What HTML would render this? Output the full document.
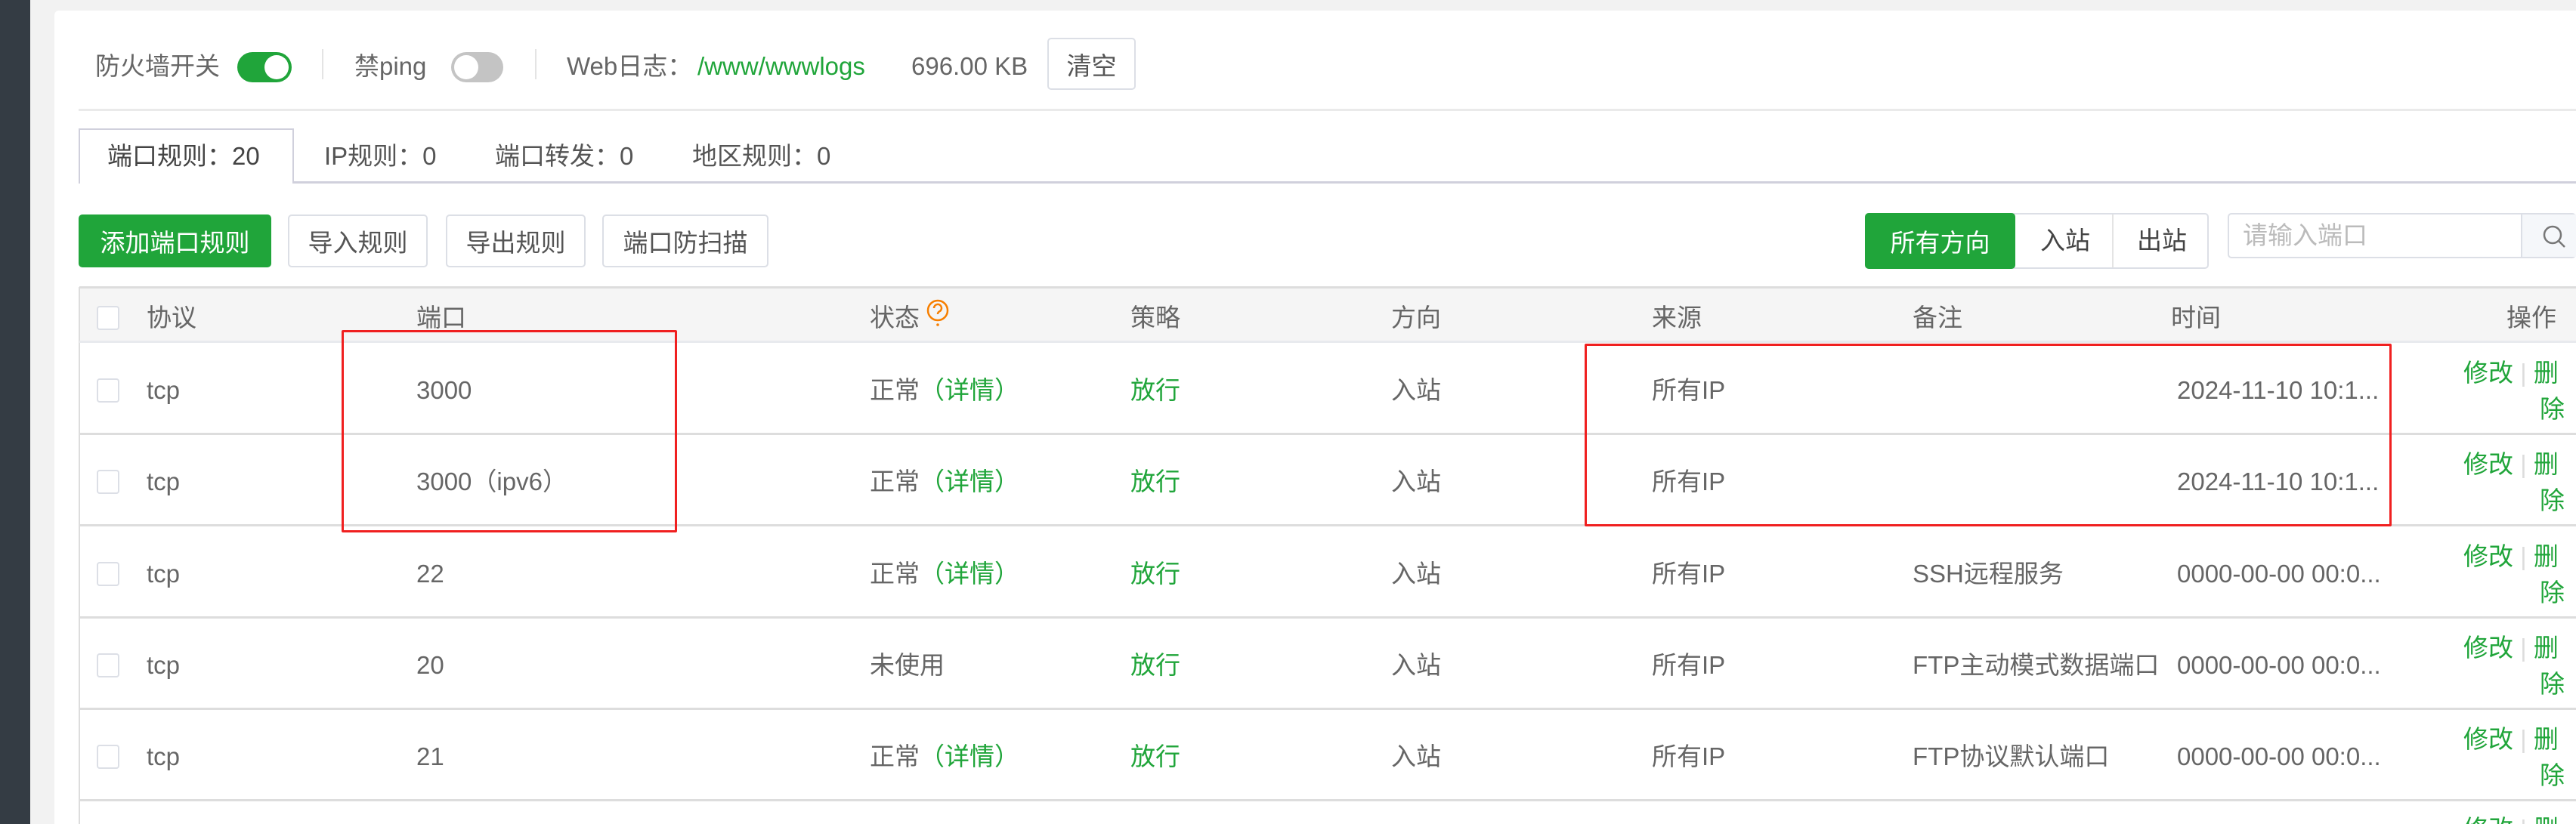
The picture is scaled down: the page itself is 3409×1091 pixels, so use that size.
<!DOCTYPE html>
<html style="width:3409px;height:1091px;overflow:hidden"><head><meta charset="utf-8"><style>
*{margin:0;padding:0;box-sizing:border-box}
body{width:3409px;height:1091px;overflow:hidden;background:#f2f2f2;position:relative;font-family:"Liberation Sans","Noto Sans CJK SC",sans-serif;font-size:33px;color:#666}
.a{position:absolute;white-space:nowrap}
.g{color:#20a53a}
.btn{position:absolute;border:2px solid #dcdfe6;border-radius:5px;background:#fff;display:flex;align-items:center;justify-content:center;color:#555}
.cb{position:absolute;left:128px;width:30px;height:32px;border:2px solid #dcdfe6;border-radius:4px;background:#fff}
.hl{position:absolute;left:105px;right:0;height:3px;background:#ddd}
.t{position:absolute;white-space:nowrap;line-height:40px}
.r .t{margin-top:4px}
.r .cb{margin-top:4px}
</style></head><body>
<div class="a" style="left:0;top:0;width:40px;height:1091px;background:#343c44"></div>
<div class="a" style="left:72px;top:14px;right:0;bottom:0;background:#fff;border-radius:6px 0 0 0"></div>

<div class="t" style="left:126px;top:68px">防火墙开关</div>
<div class="a" style="left:314px;top:69px;width:72px;height:40px;border-radius:20px;background:#20a53a"><div class="a" style="left:36px;top:4px;width:32px;height:32px;border-radius:50%;background:#fff"></div></div>
<div class="a" style="left:426px;top:65px;width:2px;height:40px;background:#e4e4e4"></div>
<div class="t" style="left:469px;top:68px">禁ping</div>
<div class="a" style="left:597px;top:69px;width:69px;height:40px;border-radius:20px;background:#c4c4c4"><div class="a" style="left:4px;top:4px;width:32px;height:32px;border-radius:50%;background:#fff"></div></div>
<div class="a" style="left:708px;top:65px;width:2px;height:40px;background:#e4e4e4"></div>
<div class="t" style="left:750px;top:68px">Web日志：</div>
<div class="t g" style="left:923px;top:68px">/www/wwwlogs</div>
<div class="t" style="left:1206px;top:68px">696.00 KB</div>
<div class="btn" style="left:1386px;top:50px;width:117px;height:69px">清空</div>
<div class="a" style="left:104px;top:144px;right:0;height:3px;background:#eaeaea"></div>

<div class="a" style="left:104px;top:240px;right:0;height:3px;background:#d0d0dc"></div>
<div class="a" style="left:104px;top:170px;width:285px;height:73px;border:2px solid #d0d0dc;border-bottom:none;background:#fff"></div>
<div class="t" style="left:142px;top:187px;color:#444">端口规则：20</div>
<div class="t" style="left:429px;top:187px;color:#555">IP规则：0</div>
<div class="t" style="left:655px;top:187px;color:#555">端口转发：0</div>
<div class="t" style="left:916px;top:187px;color:#555">地区规则：0</div>

<div class="btn" style="left:104px;top:284px;width:255px;height:70px;background:#20a53a;border-color:#20a53a;color:#fff">添加端口规则</div>
<div class="btn" style="left:381px;top:284px;width:185px;height:70px">导入规则</div>
<div class="btn" style="left:590px;top:284px;width:185px;height:70px">导出规则</div>
<div class="btn" style="left:797px;top:284px;width:220px;height:70px">端口防扫描</div>

<div class="a" style="left:2468px;top:282px;width:455px;height:74px;border:2px solid #dcdfe6;border-radius:5px;background:#fff"></div>
<div class="btn" style="left:2468px;top:282px;width:199px;height:74px;background:#20a53a;border-color:#20a53a;color:#fff">所有方向</div>
<div class="t" style="left:2700px;top:299px;color:#444">入站</div>
<div class="a" style="left:2795px;top:284px;width:2px;height:70px;background:#e4e4e4"></div>
<div class="t" style="left:2828px;top:299px;color:#444">出站</div>
<div class="a" style="left:2948px;top:282px;width:461px;height:60px;border:2px solid #dcdfe6;border-radius:5px;background:#fff"></div>
<div class="t" style="left:2968px;top:292px;color:#bbb">请输入端口</div>
<div class="a" style="left:3336px;top:284px;width:73px;height:56px;background:#f5f7fa;border-left:2px solid #dcdfe6"></div>
<svg class="a" style="left:3362px;top:296px" width="40" height="36" viewBox="0 0 40 36"><circle cx="16" cy="15" r="11" fill="none" stroke="#777" stroke-width="2.5"/><line x1="24" y1="23" x2="32" y2="31" stroke="#777" stroke-width="2.5"/></svg>

<div class="a" style="left:105px;top:380px;right:0;height:72px;background:#f5f5f5"></div>
<div class="hl" style="top:379px"></div>
<div class="a" style="left:104px;top:380px;width:2px;height:711px;background:#ddd"></div>
<div class="hl" style="top:451px;background:#e8eaee"></div>
<div class="hl" style="top:573px"></div>
<div class="hl" style="top:694px"></div>
<div class="hl" style="top:816px"></div>
<div class="hl" style="top:937px"></div>
<div class="hl" style="top:1058px"></div>

<div class="cb" style="top:405px"></div>
<div class="t" style="left:194px;top:401px">协议</div>
<div class="t" style="left:551px;top:401px">端口</div>
<div class="t" style="left:1151px;top:401px">状态</div>
<svg class="a" style="left:1225px;top:396px" width="34" height="40" viewBox="0 0 34 40"><circle cx="16" cy="15" r="13" fill="none" stroke="#f77f00" stroke-width="2.5"/><path d="M11 12a5 5 0 1 1 7 4.5c-1.5.8-2 1.5-2 3.5" fill="none" stroke="#f77f00" stroke-width="2.5"/><circle cx="16" cy="34" r="1.8" fill="#f77f00"/></svg>
<div class="t" style="left:1496px;top:401px">策略</div>
<div class="t" style="left:1841px;top:401px">方向</div>
<div class="t" style="left:2186px;top:401px">来源</div>
<div class="t" style="left:2531px;top:401px">备注</div>
<div class="t" style="left:2873px;top:401px">时间</div>
<div class="t" style="left:3317px;top:401px">操作</div>

<div class="r">
<div class="cb" style="top:497px"></div>
<div class="t" style="left:194px;top:493px">tcp</div>
<div class="t" style="left:551px;top:493px">3000</div>
<div class="t" style="left:1151px;top:493px">正常<span class="g">（详情）</span></div>
<div class="t g" style="left:1496px;top:493px">放行</div>
<div class="t" style="left:1841px;top:493px">入站</div>
<div class="t" style="left:2186px;top:493px">所有IP</div>
<div class="t" style="left:2881px;top:493px">2024-11-10 10:1...</div>
<div class="t g" style="left:3260px;top:470px">修改 <span style="color:#ddd">|</span> 删</div>
<div class="t g" style="left:3361px;top:518px">除</div>

<div class="cb" style="top:618px"></div>
<div class="t" style="left:194px;top:614px">tcp</div>
<div class="t" style="left:551px;top:614px">3000（ipv6）</div>
<div class="t" style="left:1151px;top:614px">正常<span class="g">（详情）</span></div>
<div class="t g" style="left:1496px;top:614px">放行</div>
<div class="t" style="left:1841px;top:614px">入站</div>
<div class="t" style="left:2186px;top:614px">所有IP</div>
<div class="t" style="left:2881px;top:614px">2024-11-10 10:1...</div>
<div class="t g" style="left:3260px;top:591px">修改 <span style="color:#ddd">|</span> 删</div>
<div class="t g" style="left:3361px;top:639px">除</div>

<div class="cb" style="top:740px"></div>
<div class="t" style="left:194px;top:736px">tcp</div>
<div class="t" style="left:551px;top:736px">22</div>
<div class="t" style="left:1151px;top:736px">正常<span class="g">（详情）</span></div>
<div class="t g" style="left:1496px;top:736px">放行</div>
<div class="t" style="left:1841px;top:736px">入站</div>
<div class="t" style="left:2186px;top:736px">所有IP</div>
<div class="t" style="left:2531px;top:736px">SSH远程服务</div>
<div class="t" style="left:2881px;top:736px">0000-00-00 00:0...</div>
<div class="t g" style="left:3260px;top:713px">修改 <span style="color:#ddd">|</span> 删</div>
<div class="t g" style="left:3361px;top:761px">除</div>

<div class="cb" style="top:861px"></div>
<div class="t" style="left:194px;top:857px">tcp</div>
<div class="t" style="left:551px;top:857px">20</div>
<div class="t" style="left:1151px;top:857px">未使用</div>
<div class="t g" style="left:1496px;top:857px">放行</div>
<div class="t" style="left:1841px;top:857px">入站</div>
<div class="t" style="left:2186px;top:857px">所有IP</div>
<div class="t" style="left:2531px;top:857px">FTP主动模式数据端口</div>
<div class="t" style="left:2881px;top:857px">0000-00-00 00:0...</div>
<div class="t g" style="left:3260px;top:834px">修改 <span style="color:#ddd">|</span> 删</div>
<div class="t g" style="left:3361px;top:882px">除</div>

<div class="cb" style="top:982px"></div>
<div class="t" style="left:194px;top:978px">tcp</div>
<div class="t" style="left:551px;top:978px">21</div>
<div class="t" style="left:1151px;top:978px">正常<span class="g">（详情）</span></div>
<div class="t g" style="left:1496px;top:978px">放行</div>
<div class="t" style="left:1841px;top:978px">入站</div>
<div class="t" style="left:2186px;top:978px">所有IP</div>
<div class="t" style="left:2531px;top:978px">FTP协议默认端口</div>
<div class="t" style="left:2881px;top:978px">0000-00-00 00:0...</div>
<div class="t g" style="left:3260px;top:955px">修改 <span style="color:#ddd">|</span> 删</div>
<div class="t g" style="left:3361px;top:1003px">除</div>
</div>

<div class="a" style="left:3250px;top:1070px;width:159px;height:21px;overflow:hidden"><div class="t g" style="left:10px;top:8px">修改 <span style="color:#ddd">|</span> 删</div></div>

<div class="a" style="left:452px;top:437px;width:444px;height:268px;border:3px solid #f02020;border-radius:2px"></div>
<div class="a" style="left:2097px;top:455px;width:1068px;height:242px;border:3px solid #f02020;border-radius:2px"></div>
</body></html>
